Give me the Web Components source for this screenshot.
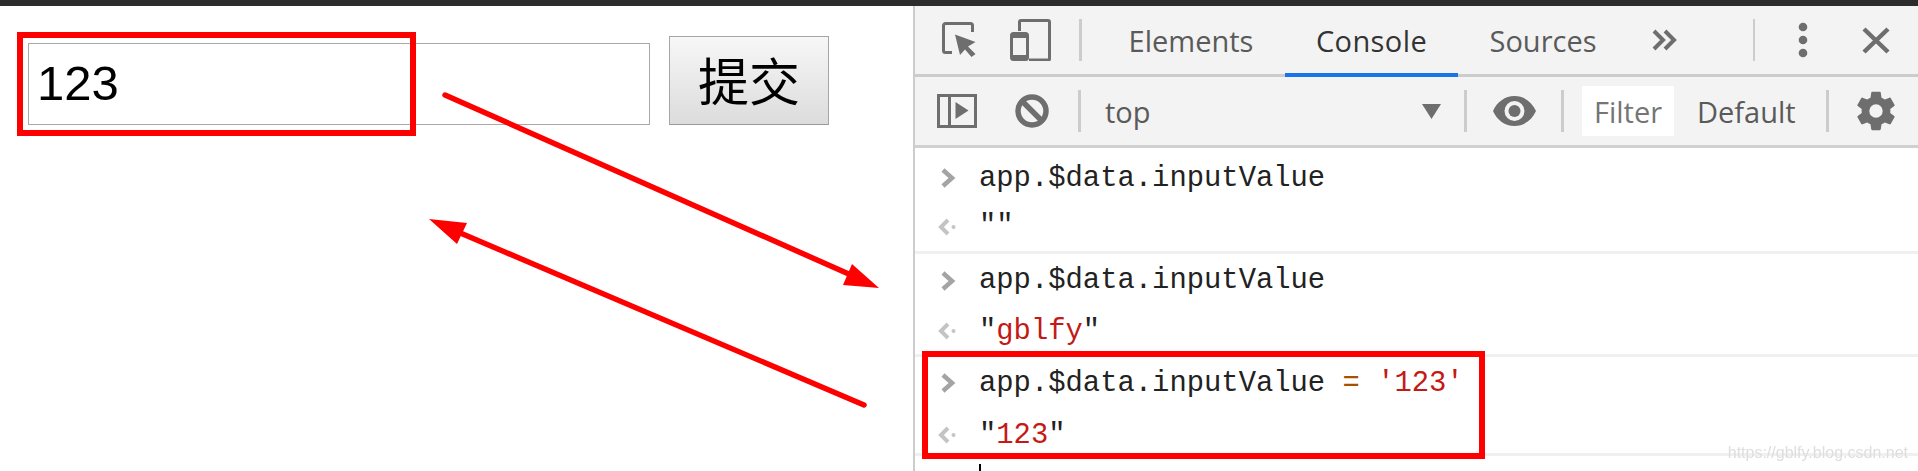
<!DOCTYPE html>
<html lang="zh">
<head>
<meta charset="utf-8">
<title>Console</title>
<style>
  html, body { margin: 0; height: 100%; background: #fff; overflow: hidden; }
  body { display: flex; flex-direction: column; width: 1918px; height: 471px; position: relative; }
</style>
</head>
<body>
<top-bar></top-bar>
<main-split>
  <demo-page value="123" label="提交"></demo-page>
  <dev-tools>
    <tool-bar-main></tool-bar-main>
    <tool-bar-console></tool-bar-console>
    <console-view>
      <console-entry style="--h:103px;--a:60px;--b:37px" input="app.$data.inputValue"><span>""</span></console-entry>
      <console-entry style="--h:100px;--a:53px;--b:48px" input="app.$data.inputValue"><span>"<span style="color:#c41a16">gblfy</span>"</span></console-entry>
      <console-entry style="--h:96px;--a:52px;--b:52px" input="app.$data.inputValue" assign="'123'"><span>"<span style="color:#c41a16">123</span>"</span></console-entry>
      <console-caret></console-caret>
    </console-view>
  </dev-tools>
</main-split>
<markup-layer></markup-layer>
<script>
function def(name, html, extra) {
  const tpl = document.createElement('template');
  tpl.innerHTML = html;
  customElements.define(name, class extends HTMLElement {
    constructor() { super(); this.attachShadow({ mode: 'open' }).appendChild(tpl.content.cloneNode(true)); }
    connectedCallback() { if (extra) extra(this); }
  });
}
const UI = '"Open Sans", "Noto Sans", sans-serif';

def('top-bar', `<style>:host{display:block;height:6px;background:#2c2c2c;flex:none}</style>`);

def('main-split', `<style>:host{display:flex;flex:1;min-height:0}</style><slot></slot>`);

def('demo-page', `<style>
  :host{display:flex;flex:none;width:913px;box-sizing:border-box;padding:30px 0 0 28px;align-items:flex-start;gap:19px}
  .in{width:622px;height:82px;box-sizing:border-box;margin-top:7px;border:1px solid #a9a9a9;background:#fff;
      font:49px/78px "Liberation Sans",Arial,sans-serif;color:#000;padding-left:8px}
  .btn{width:160px;height:89px;box-sizing:border-box;border:1px solid #a6a6a6;border-bottom-color:#999;
      background:linear-gradient(#f7f7f7,#dcdcdc);font:51px/84px "Noto Sans CJK SC",sans-serif;color:#000;text-align:center}
</style><div class="in" id="i"></div><div class="btn" id="b"></div>`, el => {
  el.shadowRoot.getElementById('i').textContent = el.getAttribute('value');
  el.shadowRoot.getElementById('b').textContent = el.getAttribute('label');
});

def('dev-tools', `<style>:host{display:flex;flex-direction:column;flex:1;min-width:0;border-left:2px solid #ccc;background:#fff}</style><slot></slot>`);

def('tool-bar-main', `<style>
  :host{display:flex;flex:none;height:68px;background:#f3f3f3;border-bottom:3px solid #ccc;align-items:center;position:relative;font:29px ${UI};color:#5a5a5a}
  svg{display:block;flex:none}
  .sep{display:block;width:3px;height:42px;background:#ccc;flex:none}
  .tab{height:68px;box-sizing:border-box;line-height:70px;flex:none;text-align:center}
  .on{color:#333;position:relative;letter-spacing:.4px}
  .on::after{content:"";position:absolute;left:0;right:0;bottom:-3px;height:4px;background:#1a73e8}
  .thin{width:2px}
</style>
<svg style="margin-left:27px" width="36" height="36" viewBox="0 0 36 36" fill="none">
  <path d="M10 30.500H3.500a2 2 0 0 1-2-2V3.500a2 2 0 0 1 2-2h25a2 2 0 0 1 2 2V10" stroke="#6e6e6e" stroke-width="3"/>
  <path d="M13 12.500L33.500 20 26 24.500 33.500 32 29.500 35 23 27.500 18 33z" fill="#6e6e6e"/>
</svg>
<svg style="margin-left:32px" width="41" height="42" viewBox="0 0 41 42" fill="none">
  <path d="M9.500 12V3a1.500 1.500 0 0 1 1.500-1.500h27A1.500 1.500 0 0 1 39.500 3v37a1 1 0 0 1-1 1H19" stroke="#6e6e6e" stroke-width="3"/>
  <rect x="1.500" y="14.500" width="16" height="26" rx="2" stroke="#6e6e6e" stroke-width="3"/>
  <rect x="1" y="14" width="17" height="5" fill="#6e6e6e"/><rect x="1" y="36" width="17" height="5" fill="#6e6e6e"/>
</svg>
<i class="sep" style="margin-left:28px"></i>
<div class="tab" style="margin-left:46px;width:126px">Elements</div>
<div class="tab on" style="margin-left:31px;width:173px">Console</div>
<div class="tab" style="margin-left:30px;width:110px">Sources</div>
<svg style="margin-left:54px" width="25" height="22" viewBox="0 0 25 22" fill="none" stroke="#6e6e6e" stroke-width="4">
  <path d="M2 2l9 9-9 9M13 2l9 9-9 9"/>
</svg>
<i class="sep thin" style="margin-left:76px"></i>
<svg style="margin-left:43px" width="10" height="36" viewBox="0 0 10 36" fill="#6e6e6e">
  <circle cx="5" cy="5" r="4.300"/><circle cx="5" cy="18" r="4.300"/><circle cx="5" cy="31" r="4.300"/>
</svg>
<svg style="margin-left:54px" width="28" height="27" viewBox="0 0 28 27" fill="none" stroke="#6e6e6e" stroke-width="4.500">
  <path d="M2 2l24 23M26 2L2 25"/>
</svg>`);

def('tool-bar-console', `<style>
  :host{display:flex;flex:none;height:68px;background:#f3f3f3;border-bottom:3px solid #d0d0d0;align-items:center;font:29px ${UI};color:#5a5a5a}
  svg{display:block;flex:none}
  .sep{display:block;width:3px;height:42px;background:#ccc;flex:none}
  .filter{background:#fff;width:92px;height:50px;line-height:52px;box-sizing:border-box;padding-left:12px;flex:none;color:#757575;overflow:hidden}
</style>
<svg style="margin-left:22px" width="40" height="34" viewBox="0 0 40 34" fill="none">
  <rect x="1.500" y="1.500" width="37" height="31" stroke="#6e6e6e" stroke-width="3"/>
  <path d="M12.500 1v32" stroke="#6e6e6e" stroke-width="3"/><path d="M18.500 8l13 8.500-13 8.500z" fill="#6e6e6e"/>
</svg>
<svg style="margin-left:38px" width="34" height="34" viewBox="0 0 34 34" fill="none" stroke="#6e6e6e" stroke-width="5.500">
  <circle cx="17" cy="17" r="14"/><path d="M7 7l20 20"/>
</svg>
<i class="sep" style="margin-left:29px"></i>
<div style="margin-left:24px;width:100px;flex:none">top</div>
<svg style="margin-left:217px" width="19" height="15" viewBox="0 0 19 15" fill="#6e6e6e"><path d="M0 0h19L9.500 15z"/></svg>
<i class="sep" style="margin-left:23px"></i>
<svg style="margin-left:26px" width="43" height="30" viewBox="0 0 43 30">
  <path fill-rule="evenodd" fill="#6e6e6e" d="M21.500 0C12 0 4 6 0 15c4 9 12 15 21.500 15S39 24 43 15C39 6 31 0 21.500 0zm0 5a10 10 0 1 1 0 20 10 10 0 0 1 0-20z"/>
  <circle cx="21.500" cy="15" r="6" fill="#6e6e6e"/>
</svg>
<i class="sep" style="margin-left:25px"></i>
<div class="filter" style="margin-left:18px">Filter</div>
<div style="margin-left:23px;width:100px;flex:none">Default</div>
<i class="sep" style="margin-left:29px"></i>
<svg style="margin-left:24px" width="46" height="46" viewBox="0 0 24 24" fill="#6e6e6e">
  <path d="M19.430 12.980c.04-.32.070-.64.070-.98s-.03-.66-.07-.98l2.110-1.650c.19-.15.24-.42.120-.64l-2-3.460c-.12-.22-.39-.3-.61-.22l-2.490 1c-.52-.4-1.080-.73-1.690-.98l-.38-2.650A.488.488 0 0 0 14 2h-4c-.25 0-.46.180-.49.420l-.38 2.650c-.61.250-1.170.59-1.690.98l-2.490-1c-.23-.09-.49 0-.61.220l-2 3.460c-.13.220-.07.490.12.640l2.110 1.650c-.04.320-.07.650-.07.980s.03.660.07.980l-2.110 1.650c-.19.150-.24.420-.12.640l2 3.460c.12.220.39.300.61.220l2.490-1c.52.400 1.080.730 1.690.980l.38 2.650c.03.240.24.420.49.420h4c.25 0 .46-.180.49-.420l.38-2.650c.61-.250 1.170-.590 1.690-.980l2.490 1c.23.090.49 0 .61-.220l2-3.460c.12-.22.070-.490-.12-.64l-2.110-1.650zM12 15.500A3.500 3.500 0 1 1 12 8.500a3.500 3.500 0 0 1 0 7z"/>
</svg>`);

def('console-view', `<style>:host{display:block;flex:1;min-height:0;overflow:hidden;background:#fff;font:28.85px "Liberation Mono",monospace;color:#222}</style><slot></slot>`);

def('console-entry', `<style>
  :host{display:block;height:var(--h);border-bottom:3px solid #f0f0f0}
  .row{display:flex;align-items:center}
  .row svg{flex:none}
  .t{white-space:pre}
  .op{color:#a85000}.str{color:#c41a16}
</style>
<div class="row" style="height:var(--a)"><svg style="margin-left:26px" width="15" height="20" viewBox="0 0 15 20" fill="none" stroke="#a4a4a4" stroke-width="4.500"><path d="M2 2l9 8-9 8"/></svg><span class="t" style="margin-left:23px" id="inp"></span></div>
<div class="row" style="height:var(--b)"><svg style="margin-left:22px" width="20" height="20" viewBox="0 0 20 20" fill="none" stroke="#c4c4c4" stroke-width="4"><path d="M11 3L4 10l7 7"/><circle cx="16.500" cy="10" r="2" fill="#c4c4c4" stroke="none"/></svg><span class="t" style="margin-left:22px"><slot></slot></span></div>`, el => {
  const s = el.shadowRoot.getElementById('inp');
  s.textContent = el.getAttribute('input');
  const a = el.getAttribute('assign');
  if (a) s.innerHTML += ` <span class="op">=</span> <span class="str">${a}</span>`;
});

def('console-caret', `<style>:host{display:block;width:2px;height:8px;margin:8px 0 0 64px;background:#000}</style>`);

def('markup-layer', `<style>
  :host{position:absolute;inset:0;pointer-events:none;display:block}
  svg{position:absolute;left:0;top:0}
  .mark{position:absolute;right:10px;top:444px;font:16px/18px "Liberation Sans",Arial,sans-serif;color:#dedede;filter:blur(.5px);white-space:nowrap}
</style>
<svg width="1918" height="471" viewBox="0 0 1918 471" fill="none">
  <rect x="20" y="35" width="393" height="98" stroke="#f00" stroke-width="6"/>
  <rect x="925" y="354" width="557" height="102" stroke="#f00" stroke-width="6"/>
  <path d="M445 95L851 275M864 405L451 229" stroke="#f00" stroke-width="5.500" stroke-linecap="round"/>
  <path d="M879 288L852 264 843 285zM429 219L467 223 457 244z" fill="#f00"/>
</svg>
<div class="mark">https://gblfy.blog.csdn.net</div>`);
</script>
</body>
</html>
